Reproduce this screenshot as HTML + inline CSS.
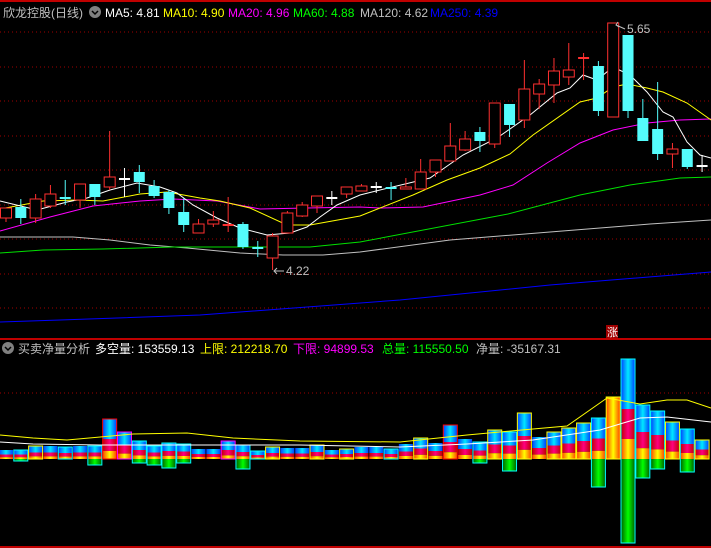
<!DOCTYPE html>
<html><head><meta charset="utf-8"><style>
html,body{margin:0;padding:0;background:#000;width:711px;height:548px;overflow:hidden}
svg{display:block}
text{font-family:"Liberation Sans","Noto Sans CJK SC",sans-serif;font-size:12px}
</style></head><body>
<svg id="s" width="711" height="548" xmlns="http://www.w3.org/2000/svg">
<defs>
<linearGradient id="gb" x1="0" x2="1" y1="0" y2="0"><stop offset="0" stop-color="#0040ff"/><stop offset="0.5" stop-color="#00e8ff"/><stop offset="1" stop-color="#0040ff"/></linearGradient>
<linearGradient id="gr" x1="0" x2="1" y1="0" y2="0"><stop offset="0" stop-color="#c00000"/><stop offset="0.5" stop-color="#ff0080"/><stop offset="1" stop-color="#c00000"/></linearGradient>
<linearGradient id="go" x1="0" x2="1" y1="0" y2="0"><stop offset="0" stop-color="#ff4000"/><stop offset="0.5" stop-color="#ffff00"/><stop offset="1" stop-color="#ff4000"/></linearGradient>
<linearGradient id="gg" x1="0" x2="1" y1="0" y2="0"><stop offset="0" stop-color="#006000"/><stop offset="0.5" stop-color="#00ff00"/><stop offset="1" stop-color="#006000"/></linearGradient>
</defs>
<g id="g"></g>
<line x1="0" y1="1" x2="711" y2="1" stroke="#c00000" stroke-width="2"/>
<line x1="0" y1="339" x2="711" y2="339" stroke="#c00000" stroke-width="2"/>
<line x1="0" y1="547" x2="711" y2="547" stroke="#c00000" stroke-width="2"/>
<text x="3" y="17" fill="#c0c0c0">欣龙控股(日线)</text>
<circle cx="95" cy="12" r="6" fill="#808080"/><path d="M92 11 L95 14 L98 11" stroke="#000" stroke-width="1.5" fill="none"/>
<text x="105" y="17" fill="#fff">MA5: 4.81</text>
<text x="163" y="17" fill="#ffff00">MA10: 4.90</text>
<text x="228" y="17" fill="#ff00ff">MA20: 4.96</text>
<text x="293" y="17" fill="#00ff00">MA60: 4.88</text>
<text x="360" y="17" fill="#c0c0c0">MA120: 4.62</text>
<text x="430" y="17" fill="#0000ff">MA250: 4.39</text>
<circle cx="8" cy="348" r="6" fill="#808080"/><path d="M5 347 L8 350 L11 347" stroke="#000" stroke-width="1.5" fill="none"/>
<text x="18" y="353" fill="#c0c0c0">买卖净量分析</text>
<text x="95" y="353" fill="#fff">多空量: 153559.13</text>
<text x="200" y="353" fill="#ffff00">上限: 212218.70</text>
<text x="293" y="353" fill="#ff00ff">下限: 94899.53</text>
<text x="382" y="353" fill="#00ff00">总量: 115550.50</text>
<text x="476" y="353" fill="#c0c0c0">净量: -35167.31</text>
<rect x="606" y="325" width="12" height="13" fill="#a00000"/>
<text x="607" y="336" fill="#fff" style="font-size:11px">涨</text>
<text x="286" y="275" fill="#c0c0c0">4.22</text>
<path d="M284 271 L274 271 M277 268 L274 271 L277 274" stroke="#c0c0c0" fill="none"/>
<text x="627" y="33" fill="#c0c0c0">5.65</text>
<path d="M625 29 L616 25 M618 22 L616 25 L619 27" stroke="#c0c0c0" fill="none"/>
</svg>
<script>
var h='';
// grid
[32,67,101,136,170,205,239,274,308,393].forEach(function(y){h+='<line x1="0" y1="'+y+'" x2="711" y2="'+y+'" stroke="#a00000" stroke-dasharray="1 3"/>';});
function pl(p,c){h+='<polyline fill="none" stroke="'+c+'" stroke-width="1" points="'+p+'"/>';}
pl("0,322 60,320 200,315 400,300 550,285 711,272","#0000ff");
pl("0,237 73,237 110,240 150,245 187,248 240,253 283,255 323,255 360,252 450,240 550,232 650,224 711,220","#c0c0c0");
pl("0,253 43,250 103,249 173,247 310,247 360,242 508,214 580,195 630,185 680,178 711,177","#00e000");
pl("0,231 50,217 93,206 140,201 173,199 217,201 260,209 307,208 360,207 380,208 423,207 480,195 513,185 547,163 580,143 613,130 647,123 680,120 711,119","#ff00ff");
pl("0,209 43,201 77,200 103,201 140,194 167,192 200,198 220,201 250,208 287,225 310,225 360,216 380,208 413,195 447,180 480,168 510,154 533,135 580,102 597,98 613,87 627,84 647,88 663,92 687,103 711,120","#ffff00");
pl("0,201 37,210 67,202 87,198 110,190 137,183 160,187 177,193 193,205 217,218 240,228 267,235 290,233 307,227 320,217 337,205 360,195 380,190 430,178 463,155 497,138 530,115 557,93 570,88 583,75 597,80 613,67 630,75 647,92 663,112 673,117 687,142 700,155 711,158","#ffffff");
// candles: type r red hollow, c cyan, w white cross, rc red cross, cc cyan cross ; [type,top,bot,hi,lo]
var C=[['r',208,218,208,222],['c',207,218,199,224],['r',199,218,194,223],['r',194,206,185,208],['cc',198,198,180,205],['r',184,200,184,208],['c',184,197,184,205],['r',177,187,131,190],['w',179,179,168,197],['c',172,182,165,193],['c',186,196,180,198],['c',192,208,190,214],['c',212,225,198,232],['r',224,233,219,233],['r',220,224,211,227],['rc',225,225,197,232],['c',224,247,222,249],['cc',248,250,241,257],['r',236,258,233,270],['r',213,233,211,233],['r',205,216,202,217],['r',196,206,196,213],['w',198,198,191,205],['r',187,194,187,198],['r',186,191,184,191],['w',187,187,182,193],['cc',188,188,182,200],['r',187,189,178,189],['r',172,189,159,189],['r',160,172,160,177],['r',146,161,123,161],['r',139,150,131,151],['c',132,141,127,152],['r',103,144,103,148],['c',104,125,104,137],['r',89,120,60,128],['r',84,94,79,109],['r',71,85,58,103],['r',70,77,43,85],['rc',58,58,53,80],['c',66,111,61,116],['r',23,117,23,117],['c',35,111,35,118],['c',118,141,99,141],['c',129,154,82,160],['r',149,154,143,168],['c',149,167,149,169],['w',166,166,155,172]];
C.forEach(function(d,i){var x=6+i*14.81,t=d[0];
 var col=(t=='r'||t=='rc')?'#ff3030':(t=='w'?'#ffffff':'#54fcfc');
 h+='<line x1="'+x+'" y1="'+d[3]+'" x2="'+x+'" y2="'+d[4]+'" stroke="'+col+'"/>';
 if(t=='r')h+='<rect x="'+(x-5.5)+'" y="'+d[1]+'" width="11" height="'+Math.max(d[2]-d[1],1)+'" fill="#000" stroke="'+col+'"/>';
 else if(t=='c')h+='<rect x="'+(x-5.5)+'" y="'+d[1]+'" width="11" height="'+(d[2]-d[1])+'" fill="'+col+'"/>';
 else h+='<line x1="'+(x-5.5)+'" y1="'+d[1]+'" x2="'+(x+5.5)+'" y2="'+d[1]+'" stroke="'+col+'" stroke-width="2"/>';
});
// lower panel bars [top, neg, outline]
var B=[[450,0,''],[450,461,'#00ffff'],[446,0,'#ffff00'],[446,0,''],[447,459,'#00ffff'],[446,0,''],[446,465,'#00ffff'],[419,0,'#ff0000'],[432,0,'#ff00ff'],[441,463,'#00ffff'],[446,465,'#00ffff'],[443,468,'#00ffff'],[444,463,'#00ffff'],[449,0,''],[449,0,''],[441,0,'#ff00ff'],[445,469,'#00ffff'],[451,459,'#00ffff'],[447,0,'#ffff00'],[448,0,''],[448,0,''],[445,0,'#ffff00'],[450,0,''],[449,0,'#ffff00'],[447,0,''],[447,0,''],[449,459,'#00ffff'],[444,0,''],[438,0,'#ffff00'],[443,0,''],[425,0,'#ff0000'],[439,0,''],[442,463,'#00ffff'],[430,0,'#ffff00'],[432,471,'#00ffff'],[413,0,'#ffff00'],[437,0,''],[432,0,'#ffff00'],[428,0,'#ffff00'],[423,0,'#ffff00'],[418,487,'#00ffff'],[397,0,'#ffff00'],[359,543,'#00ffff'],[405,478,'#00ffff'],[411,469,'#00ffff'],[422,0,'#ffff00'],[429,472,'#00ffff'],[440,0,'#ffff00']];
var base=459;
B.forEach(function(d,i){var x=6+i*14.81-7,w=14,t=d[0],H=base-t;
 if(i==41){h+='<rect x="'+x+'" y="'+t+'" width="'+w+'" height="'+H+'" fill="url(#go)"/>';}
 else{var b=H*0.5,r=H*0.3,o=H-b-r;
 h+='<rect x="'+x+'" y="'+t+'" width="'+w+'" height="'+b+'" fill="url(#gb)"/>';
 h+='<rect x="'+x+'" y="'+(t+b)+'" width="'+w+'" height="'+r+'" fill="url(#gr)"/>';
 h+='<rect x="'+x+'" y="'+(t+b+r)+'" width="'+w+'" height="'+o+'" fill="url(#go)"/>';}
 if(d[1])h+='<rect x="'+x+'" y="'+base+'" width="'+w+'" height="'+(d[1]-base)+'" fill="url(#gg)"/>';
 if(d[2])h+='<rect x="'+x+'" y="'+t+'" width="'+w+'" height="'+((d[1]||base)-t)+'" fill="none" stroke="'+d[2]+'"/>';
});
pl("0,435 33,438 67,440 133,434 187,433 233,438 300,441 400,442 467,435 533,429 567,426 607,398 640,404 667,400 687,400 711,408","#ffff00");
pl("0,442 33,444 100,445 300,445 400,447 467,444 533,440 600,430 640,418 667,417 711,422","#ffffff");
document.getElementById('g').innerHTML=h;
</script>
</body></html>
